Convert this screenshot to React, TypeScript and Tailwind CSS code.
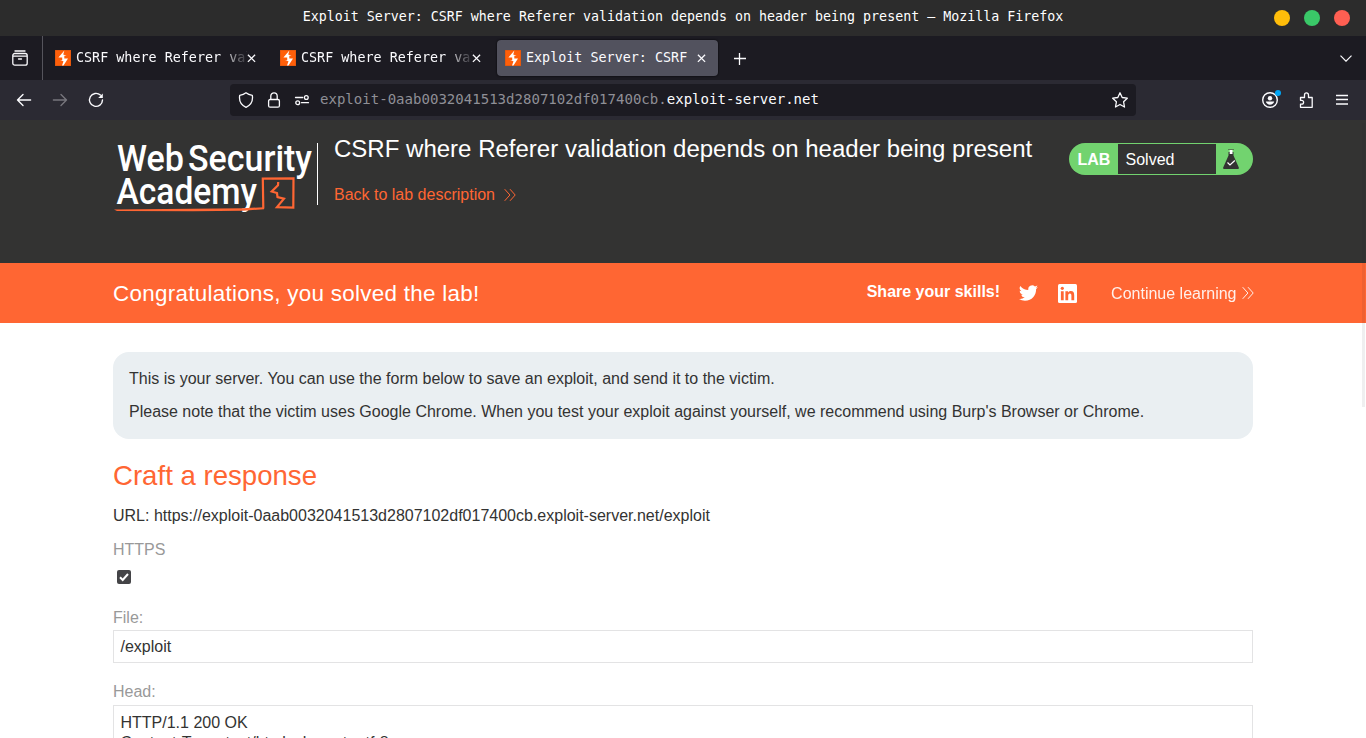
import React from "react";

const MONO = "font-['DejaVu_Sans_Mono',monospace]";

function Favicon() {
  return (
    <svg className="size-4 shrink-0" viewBox="0 0 16 16">
      <rect width="16" height="16" fill="#d9560f" />
      <rect x=".6" y=".6" width="14.8" height="14.8" fill="#ff5f0a" />
      <path d="M9.400 .6 3.400 7.600h3.800v2.600H5L8.500 11.300 7 15.400h1.500L13 8.400H9.300V5.800h2.300L8.200 4.600z" fill="#fff" />
    </svg>
  );
}

function CloseIcon() {
  return (
    <svg className="size-[9px] shrink-0" viewBox="0 0 9 9" fill="none" stroke="#fbfbfe" strokeWidth="1.3">
      <path d="M.9.7l7.200 7.200M8.100.7.9 7.900" />
    </svg>
  );
}

function Tab({ title, active }: { title: string; active?: boolean }) {
  return (
    <div className={active ? "flex h-9 w-[221px] items-center rounded bg-[#52525e] pl-2 shadow-[0_0_2px_#000]" : "flex h-9 w-[225px] items-center pl-2"}>
      <Favicon />
      <span className={active ? "ml-[5px] w-[171px] overflow-hidden whitespace-pre" : "ml-[5px] w-[171px] overflow-hidden whitespace-pre [mask-image:linear-gradient(to_right,#000_145px,transparent_173px)]"}>
        {title}
      </span>
      <CloseIcon />
    </div>
  );
}

function Chevrons({ className }: { className: string }) {
  return (
    <svg className={className} viewBox="0 0 12 12" fill="none" stroke="currentColor" strokeWidth="1">
      <path d="M.7.2l5.200 5.800-5.200 5.800M6 .2l5.200 5.800L6 11.800" />
    </svg>
  );
}

function TitleBar() {
  return (
    <div className={`relative flex h-9 items-center justify-center bg-[#2c2c2c] pb-[3px] text-[13.3px] text-white ${MONO}`}>
      <span className="whitespace-pre">Exploit Server: CSRF where Referer validation depends on header being present — Mozilla Firefox</span>
      <div className="absolute top-[10px] right-4 flex gap-[14px]">
        <i className="size-4 rounded-full bg-[#ffbd0a]" />
        <i className="size-4 rounded-full bg-[#3ac868]" />
        <i className="size-4 rounded-full bg-[#ff5f52]" />
      </div>
    </div>
  );
}

function TabBar() {
  return (
    <div className={`flex h-11 items-center bg-[#1c1b22] text-[13.4px] text-[#fbfbfe] ${MONO}`}>
      <div className="flex h-11 w-[43px] items-center border-r border-[#55545c] pl-3">
        <svg className="size-4" viewBox="0 0 16 16" fill="none" stroke="#fbfbfe" strokeWidth="1.3" strokeLinecap="round">
          <path d="M3 1h10" />
          <path d="M.8 6.300V5.500a2 2 0 0 1 2-2h10.400a2 2 0 0 1 2 2v.8M.8 6v7.200a2 2 0 0 0 2 2h10.400a2 2 0 0 0 2-2V6M.8 6.200h14.400M6.500 9h3" />
        </svg>
      </div>
      <div className="flex pl-1">
        <Tab title="CSRF where Referer validation" />
        <Tab title="CSRF where Referer validation" />
        <Tab title="Exploit Server: CSRF" active />
      </div>
      <svg className="mt-px ml-4 size-3" viewBox="0 0 12 12" stroke="#fbfbfe" strokeWidth="1.3">
        <path d="M5.500 0v12M0 5.500h12" />
      </svg>
      <svg className="mr-[14px] ml-auto h-[7px] w-3" viewBox="0 0 12 7" fill="none" stroke="#fbfbfe" strokeWidth="1.200">
        <path d="M.5.7 6 6.200 11.500.7" />
      </svg>
    </div>
  );
}

function NavBar() {
  return (
    <div className={`flex h-10 items-center bg-[#2b2a33] text-[14.05px] text-[#fbfbfe] ${MONO}`}>
      <div className="flex w-[230px] gap-5 pl-4">
        <svg className="size-4" viewBox="0 0 16 16" fill="none" stroke="currentColor" strokeWidth="1.400" strokeLinecap="round" strokeLinejoin="round">
          <path d="M14.600 8H1.500M7 2.500 1.500 8 7 13.500" />
        </svg>
        <svg className="size-4 text-[#77767d]" viewBox="0 0 16 16" fill="none" stroke="currentColor" strokeWidth="1.400" strokeLinecap="round" strokeLinejoin="round">
          <path d="M1.400 8h13.100M9 2.500 14.500 8 9 13.500" />
        </svg>
        <svg className="size-4" viewBox="0 0 16 16" fill="none" stroke="currentColor" strokeWidth="1.400" strokeLinecap="round">
          <path d="M12.400 3.100A6.500 6.500 0 1 0 14.500 8" />
          <path d="M14.800 1.500V6h-4.600z" fill="currentColor" stroke="none" />
        </svg>
      </div>
      <div className="flex h-8 w-[906px] items-center rounded bg-[#1c1b22] px-2">
        <svg className="size-4" viewBox="0 0 16 16" fill="none" stroke="currentColor" strokeWidth="1.300" strokeLinejoin="round">
          <path d="M8 .8c1.800 1.500 4 2.200 6.300 2.500.8 5-1.300 9.800-6.300 12-5-2.200-7.100-7-6.300-12C4 3 6.200 2.300 8 .8z" />
        </svg>
        <svg className="ml-3 size-4" viewBox="0 0 16 16" fill="none" stroke="currentColor" strokeWidth="1.300">
          <rect x="2.600" y="7.500" width="10.800" height="7.700" rx="1.500" />
          <path d="M4.800 7.500V4a3.200 3.200 0 0 1 6.400 0v3.500" />
        </svg>
        <svg className="ml-3 size-4" viewBox="0 0 16 16" fill="none" stroke="currentColor" strokeWidth="1.300" strokeLinecap="round">
          <path d="M1.500 5.500h7.200M7.500 10.700h7" />
          <circle cx="12.300" cy="5.500" r="1.900" />
          <circle cx="3.700" cy="10.700" r="1.900" />
        </svg>
        <span className="ml-[10px] pb-px whitespace-pre">
          <span className="text-[#8f8f96]">exploit-0aab0032041513d2807102df017400cb.</span>exploit-server.net
        </span>
        <svg className="ml-auto size-4" viewBox="0 0 16 16" fill="none" stroke="currentColor" strokeWidth="1.300" strokeLinejoin="round">
          <path d="M8 .8l2.200 4.700 5.100.7-3.700 3.600.9 5.200L8 12.500 3.500 15l.9-5.200L.7 6.200l5.100-.7z" />
        </svg>
      </div>
      <div className="ml-auto flex items-center pr-[18px]">
        <svg className="h-5 w-[22px]" viewBox="0 0 22 20" fill="none" stroke="currentColor">
          <circle cx="9" cy="10" r="7.300" strokeWidth="1.400" />
          <circle cx="9" cy="8.200" r="2.200" fill="currentColor" stroke="none" />
          <path d="M4.800 11.600h8.400c-.3 2-2.300 3.100-4.200 3.100s-3.900-1.100-4.200-3.100z" fill="currentColor" stroke="none" />
          <circle cx="17" cy="3" r="3" fill="#00a5f5" stroke="none" />
        </svg>
        <svg className="ml-[15px] size-4" viewBox="0 0 16 16" fill="none" stroke="currentColor" strokeWidth="1.300" strokeLinejoin="round">
          <path d="M2.500 15.300h11.700V5.500h-3.700V2.900a2 2 0 0 0-4 0v2.600h-4v2.800h1.200a1.900 1.900 0 0 1 0 3.800H2.500z" />
        </svg>
        <svg className="ml-[22px] size-3" viewBox="0 0 12 12" stroke="currentColor" strokeWidth="1.300">
          <path d="M0 1.500h12M0 5.500h12M0 10h12" />
        </svg>
      </div>
    </div>
  );
}

function AcademyLogo() {
  return (
    <svg className="h-[72px] w-[204px] shrink-0" viewBox="113 143 204 72">
      <g fill="#fff" fontFamily="Roboto, sans-serif" fontWeight="500">
        <text x="117" y="171" fontSize="36.500" textLength="67" lengthAdjust="spacingAndGlyphs">Web</text>
        <text x="188" y="171" fontSize="36.500" textLength="124" lengthAdjust="spacingAndGlyphs">Security</text>
        <text x="116.500" y="204" fontSize="36.500" textLength="140.500" lengthAdjust="spacingAndGlyphs">Academy</text>
      </g>
      <path d="M263.300 208.500 262.800 178.600l30.700-.3-.2 29.200-16.300-.4 7-8.400-6.500-1.700-.5-4-5.300-1.500 6.300-6.300.2-3.200" fill="none" stroke="#ff6633" strokeWidth="2.200" />
      <path d="M114 209.600 243 208.200 264 207.200v2l-21 1.600-50 .4-76-.2z" fill="#ff6633" />
    </svg>
  );
}

function LabHeader() {
  return (
    <header className="flex h-[143px] items-start bg-[#333332] px-[113px] pt-[23px]">
      <AcademyLogo />
      <div className="h-[62px] w-px bg-white" />
      <div className="-mt-2 ml-4">
        <h1 className="text-[24.020px] leading-7 text-white">CSRF where Referer validation depends on header being present</h1>
        <a className="mt-[22px] flex items-center text-[16px] leading-5 text-[#ff6633]">
          Back to lab description
          <Chevrons className="ml-[9px] size-3" />
        </a>
      </div>
      <div className="ml-auto flex h-8 w-[184px] items-center rounded-full bg-[#72d36f] text-[16px] text-white">
        <b className="w-[49px] pt-0.5 pl-[8.500px]">LAB</b>
        <span className="flex h-[30px] w-[98px] items-center bg-[#333332] pt-px pl-[7.5px]">Solved</span>
        <svg className="ml-[7px] h-5 w-4" viewBox="0 0 16 20">
          <path d="M5.500 3h5v3.500L15.800 18.500c.3 1-.3 1.500-1 1.500H1.200c-.7 0-1.300-.5-1-1.500L5.500 6.500z" fill="#333332" />
          <path d="M5 .4h6" stroke="#56764f" />
          <rect x="6.700" y="1" width="2.800" height="4" fill="#fff" />
          <path d="M4.500 13.500 7 16l4.800-4.500" fill="none" stroke="#fff" strokeWidth="1.200" />
        </svg>
      </div>
    </header>
  );
}

function Banner() {
  return (
    <div className="flex h-[60px] items-center bg-[#ff6633] px-[113px] text-[16px] text-white">
      <span className="pt-[2px] text-[22.400px] tracking-[0.29px]">Congratulations, you solved the lab!</span>
      <b className="ml-auto pb-[3px]">Share your skills!</b>
      <svg className="ml-[19px] h-5 w-[19px]" viewBox="0 1.500 24 21" fill="#fff">
        <path d="M23.950 4.570a10 10 0 0 1-2.820.77 4.960 4.960 0 0 0 2.160-2.720c-.95.550-2 .950-3.130 1.180a4.920 4.920 0 0 0-8.380 4.480A13.980 13.980 0 0 1 1.640 3.160a4.920 4.920 0 0 0 1.520 6.570 4.900 4.900 0 0 1-2.230-.61v.06a4.920 4.920 0 0 0 3.950 4.830 5 5 0 0 1-2.210.08 4.940 4.940 0 0 0 4.600 3.420A9.870 9.870 0 0 1 0 19.540a13.990 13.990 0 0 0 7.550 2.210c9.050 0 14-7.500 14-13.980 0-.21 0-.42-.02-.63a9.940 9.940 0 0 0 2.420-2.570z" />
      </svg>
      <svg className="ml-5 size-[19px]" viewBox="0 0 19 19">
        <rect width="19" height="19" rx="1.500" fill="#fff" />
        <g fill="#ff6633">
          <circle cx="4.300" cy="4.300" r="1.600" />
          <path d="M2.900 7.200h2.800v9H2.900zM7.400 7.200h2.700v1.300c.5-.9 1.500-1.500 2.700-1.500 2.600 0 3.400 1.600 3.400 4.200v5h-2.800v-4.500c0-1.300-.2-2.300-1.500-2.300s-1.700 1-1.700 2.300v4.500H7.400z" />
        </g>
      </svg>
      <span className="ml-[34px] pt-[2px] opacity-90">Continue learning</span>
      <Chevrons className="-mr-px ml-[5.500px] size-3 opacity-90" />
    </div>
  );
}

export default function App() {
  return (
    <div className="relative h-[738px] w-[1366px] overflow-hidden bg-white font-['Liberation_Sans',Arial,sans-serif] text-[16px] text-[#333332]">
      <TitleBar />
      <TabBar />
      <NavBar />
      <LabHeader />
      <Banner />
      <main className="px-[113px] pt-[29px]">
        <section className="h-[87px] rounded-2xl bg-[#eaeff2] px-4 pt-4 leading-[22px]">
          <p>This is your server. You can use the form below to save an exploit, and send it to the victim.</p>
          <p className="mt-[11px]">Please note that the victim uses Google Chrome. When you test your exploit against yourself, we recommend using Burp's Browser or Chrome.</p>
        </section>
        <h2 className="mt-[21px] text-[27.600px] leading-8 text-[#ff6633]">Craft a response</h2>
        <p className="mt-[13px] leading-[22px]">URL: https://exploit-0aab0032041513d2807102df017400cb.exploit-server.net/exploit</p>
        <p className="mt-3 leading-[22px] text-[#999]">HTTPS</p>
        <svg className="mt-[9px] ml-1 size-[14px]" viewBox="0 0 14 14">
          <rect width="14" height="14" rx="2" fill="#444447" />
          <path d="M3 7.300 5.700 10 11 4" fill="none" stroke="#fff" strokeWidth="2" />
        </svg>
        <p className="mt-[23px] leading-[22px] text-[#999]">File:</p>
        <div className="mt-[1px] h-[33px] border border-[#e3e3e4] pl-[6.500px] leading-[31px]">/exploit</div>
        <p className="mt-[18px] leading-[22px] text-[#999]">Head:</p>
        <div className="mt-[2px] h-[60px] border border-[#e3e3e4] pt-[7px] pl-[6.500px] leading-[20px]">
          HTTP/1.1 200 OK
          <br />
          Content-Type: text/html; charset=utf-8
        </div>
      </main>
      <div className="absolute top-[123px] right-px h-[284px] w-[3px] bg-[#202024]/7" />
    </div>
  );
}
